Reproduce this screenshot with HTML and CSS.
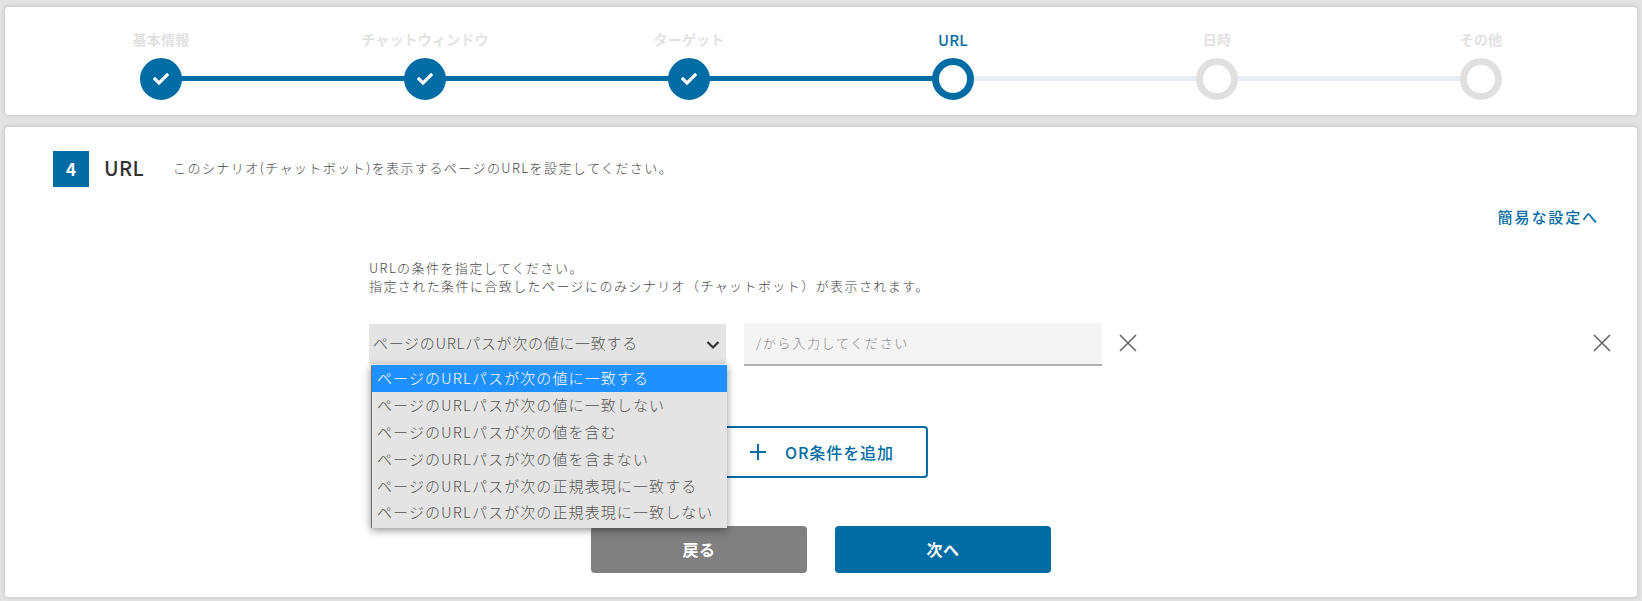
FILE: index.html
```html
<!DOCTYPE html>
<html lang="ja">
<head>
<meta charset="utf-8">
<title>URL</title>
<link rel="stylesheet" href="styles.css">
</head>
<body>
<section class="card stepper">
  <div class="step done"><span class="step-label">基本情報</span><span class="dot"><svg viewBox="0 0 512 512" class="check"><path d="M173.898 439.404l-166.4-166.4c-9.997-9.997-9.997-26.206 0-36.204l36.203-36.204c9.997-9.998 26.207-9.998 36.204 0L192 312.69 432.095 72.596c9.997-9.997 26.207-9.997 36.204 0l36.203 36.204c9.997 9.997 9.997 26.206 0 36.204l-294.4 294.401c-9.998 9.997-26.207 9.997-36.204-.001z"/></svg></span></div>
  <div class="step done"><span class="step-label">チャットウィンドウ</span><span class="dot"><svg viewBox="0 0 512 512" class="check"><path d="M173.898 439.404l-166.4-166.4c-9.997-9.997-9.997-26.206 0-36.204l36.203-36.204c9.997-9.998 26.207-9.998 36.204 0L192 312.69 432.095 72.596c9.997-9.997 26.207-9.997 36.204 0l36.203 36.204c9.997 9.997 9.997 26.206 0 36.204l-294.4 294.401c-9.998 9.997-26.207 9.997-36.204-.001z"/></svg></span></div>
  <div class="step done"><span class="step-label">ターゲット</span><span class="dot"><svg viewBox="0 0 512 512" class="check"><path d="M173.898 439.404l-166.4-166.4c-9.997-9.997-9.997-26.206 0-36.204l36.203-36.204c9.997-9.998 26.207-9.998 36.204 0L192 312.69 432.095 72.596c9.997-9.997 26.207-9.997 36.204 0l36.203 36.204c9.997 9.997 9.997 26.206 0 36.204l-294.4 294.401c-9.998 9.997-26.207 9.997-36.204-.001z"/></svg></span></div>
  <div class="step current"><span class="step-label">URL</span><span class="dot"></span></div>
  <div class="step"><span class="step-label">日時</span><span class="dot"></span></div>
  <div class="step"><span class="step-label">その他</span><span class="dot"></span></div>
</section>
<section class="card main">
  <header class="head">
    <span class="num">4</span>
    <h2 class="title">URL</h2>
    <p class="desc">このシナリオ(チャットボット)を表示するページのURLを設定してください。</p>
  </header>
  <div class="link-row"><a class="easy-link">簡易な設定へ</a></div>
  <div class="content">
    <p class="intro">URLの条件を指定してください。<br>指定された条件に合致したページにのみシナリオ（チャットボット）が表示されます。</p>
    <div class="cond-row">
      <div class="select-wrap">
        <div class="select">
          <span>ページのURLパスが次の値に一致する</span>
          <svg class="chev" viewBox="0 0 14 10"><path d="M1.5 2l5.5 5.500L12.500 2"/></svg>
        </div>
        <ul class="dropdown">
          <li class="active">ページのURLパスが次の値に一致する</li>
          <li>ページのURLパスが次の値に一致しない</li>
          <li>ページのURLパスが次の値を含む</li>
          <li>ページのURLパスが次の値を含まない</li>
          <li>ページのURLパスが次の正規表現に一致する</li>
          <li>ページのURLパスが次の正規表現に一致しない</li>
        </ul>
      </div>
      <input class="text-input" type="text" placeholder="/から入力してください">
      <svg class="close" viewBox="0 0 18 18"><path d="M1 1l16 16M17 1L1 17"/></svg>
      <svg class="close close-end" viewBox="0 0 18 18"><path d="M1 1l16 16M17 1L1 17"/></svg>
    </div>
    <div class="add-row">
      <button class="add-btn"><svg class="plus" viewBox="0 0 16 16"><path d="M8 0v16M0 8h16"/></svg><span>OR条件を追加</span></button>
    </div>
  </div>
  <div class="actions">
    <button class="btn back">戻る</button>
    <button class="btn next">次へ</button>
  </div>
</section>
</body>
</html>
```
FILE: styles.css
```css
* { box-sizing: border-box; }
html, body { height: 100%; }
body {
  margin: 0;
  padding: 7px 5px 4px;
  background: #e3e3e3;
  font-family: "Noto Sans CJK JP", "Noto Sans", sans-serif;
  color: #444;
  display: flex;
  flex-direction: column;
  gap: 12px;
  overflow: hidden;
}
.card {
  background: #fff;
  border-radius: 4px;
  box-shadow: 0 0 5px rgba(0, 0, 0, .16);
}
.stepper {
  height: 108px;
  padding: 0 24px;
  display: grid;
  grid-template-columns: repeat(6, 264px);
}
.step {
  position: relative;
  display: flex;
  flex-direction: column;
  align-items: center;
  padding-top: 24px;
}
.step::after {
  content: "";
  position: absolute;
  left: 50%;
  width: 264px;
  top: 69px;
  height: 5px;
  background: #e8ecf4;
}
.step.done::after { background: #006ca4; }
.step:last-child::after { display: none; }
.step-label {
  height: 16px;
  font-size: 14px;
  line-height: 17px;
  font-weight: 700;
  color: #e2e2e2;
  letter-spacing: .2px;
  white-space: nowrap;
}
.current .step-label { color: #006ca4; font-weight: 500; font-size: 15px; }
.dot {
  position: relative;
  z-index: 1;
  margin-top: 11px;
  width: 42px;
  height: 42px;
  border-radius: 50%;
  border: 7px solid #e0e0e0;
  background: #fff;
  display: flex;
  align-items: center;
  justify-content: center;
}
.done .dot { background: #006ca4; border-color: #006ca4; }
.current .dot { border-color: #006ca4; }
.check { width: 16px; height: 16px; flex: none; fill: #fff; }
.main {
  flex: 1;
  padding: 24px 0 0;
  display: flex;
  flex-direction: column;
}
.head {
  display: flex;
  align-items: center;
  padding-left: 48px;
  height: 36px;
}
.num {
  width: 36px;
  height: 36px;
  padding-bottom: 1px;
  background: #006ca4;
  color: #fff;
  font-size: 17px;
  font-weight: 700;
  display: flex;
  align-items: center;
  justify-content: center;
}
.title {
  margin: 0 0 4px 15px;
  width: 69px;
  font-size: 20px;
  font-weight: 500;
  color: #333;
  letter-spacing: .3px;
}
.desc {
  margin: 0 0 4px;
  font-size: 13px;
  font-weight: 300;
  letter-spacing: 1.44px;
  color: #444;
}
.link-row {
  display: flex;
  justify-content: flex-end;
  padding-right: 38px;
  margin-top: 18px;
  height: 24px;
}
.easy-link {
  font-size: 15px;
  line-height: 24px;
  font-weight: 500;
  color: #006ca4;
  letter-spacing: 1.9px;
}
.content { padding: 0 26px 0 364px; margin-top: 30px; }
.intro {
  margin: 0;
  font-size: 13px;
  font-weight: 300;
  line-height: 18px;
  letter-spacing: 1.42px;
  color: #444;
}
.cond-row {
  display: flex;
  align-items: flex-start;
  margin-top: 28px;
}
.select-wrap { position: relative; width: 357px; flex: none; margin-top: 1px; }
.select {
  height: 40px;
  background: #e4e4e4;
  padding: 0 6px 3px 4px;
  display: flex;
  align-items: center;
  justify-content: space-between;
  font-size: 15px;
  font-weight: 300;
  letter-spacing: .7px;
  color: #555;
}
.chev { width: 14px; height: 10px; margin-top: 4px; fill: none; stroke: #333; stroke-width: 2.2; }
.dropdown {
  position: absolute;
  z-index: 2;
  top: 41px;
  left: 2px;
  width: 356px;
  margin: 0;
  padding: 0 0 2px;
  list-style: none;
  background: #e4e4e4;
  border-left: 1px solid #707070;
  box-shadow: 0 2px 8px rgba(0, 0, 0, .45);
}
.dropdown li {
  height: 26.9px;
  line-height: 25px;
  padding-left: 5px;
  font-size: 15px;
  font-weight: 300;
  letter-spacing: 1.1px;
  color: #555;
  white-space: nowrap;
}
.dropdown .active { background: #1e90ff; color: #fff; }
.text-input {
  flex: none;
  width: 358px;
  height: 43px;
  margin-left: 18px;
  padding: 0 12px 2px;
  border: 0;
  border-bottom: 2px solid #b0b0b0;
  background: #f4f4f4;
  font: inherit;
  font-size: 13px;
  font-weight: 300;
  letter-spacing: 1.7px;
}
.text-input::placeholder { color: #888; }
.close { flex: none; width: 18px; height: 18px; margin: 11px 0 0 17px; fill: none; stroke: #666; stroke-width: 1.6; }
.close-end { margin-left: auto; }
.add-row { display: flex; margin-top: 60px; padding-left: 331px; }
.add-btn {
  width: 228px;
  height: 52px;
  padding: 0 0 0 48px;
  display: flex;
  align-items: center;
  gap: 19px;
  background: #fff;
  border: 2px solid #006ca4;
  border-radius: 4px;
  color: #006ca4;
  font: inherit;
  font-size: 16px;
  font-weight: 500;
  letter-spacing: .9px;
}
.plus { width: 16px; height: 16px; fill: none; stroke: #006ca4; stroke-width: 2; }
.actions {
  display: flex;
  justify-content: center;
  gap: 28px;
  margin-top: 48px;
}
.btn {
  width: 216px;
  height: 47px;
  padding: 0 0 2px;
  border: 0;
  border-radius: 4px;
  color: #fff;
  font: inherit;
  font-size: 16px;
  font-weight: 700;
  letter-spacing: .5px;
}
.back { background: #808080; }
.next { background: #006ca4; }
```
